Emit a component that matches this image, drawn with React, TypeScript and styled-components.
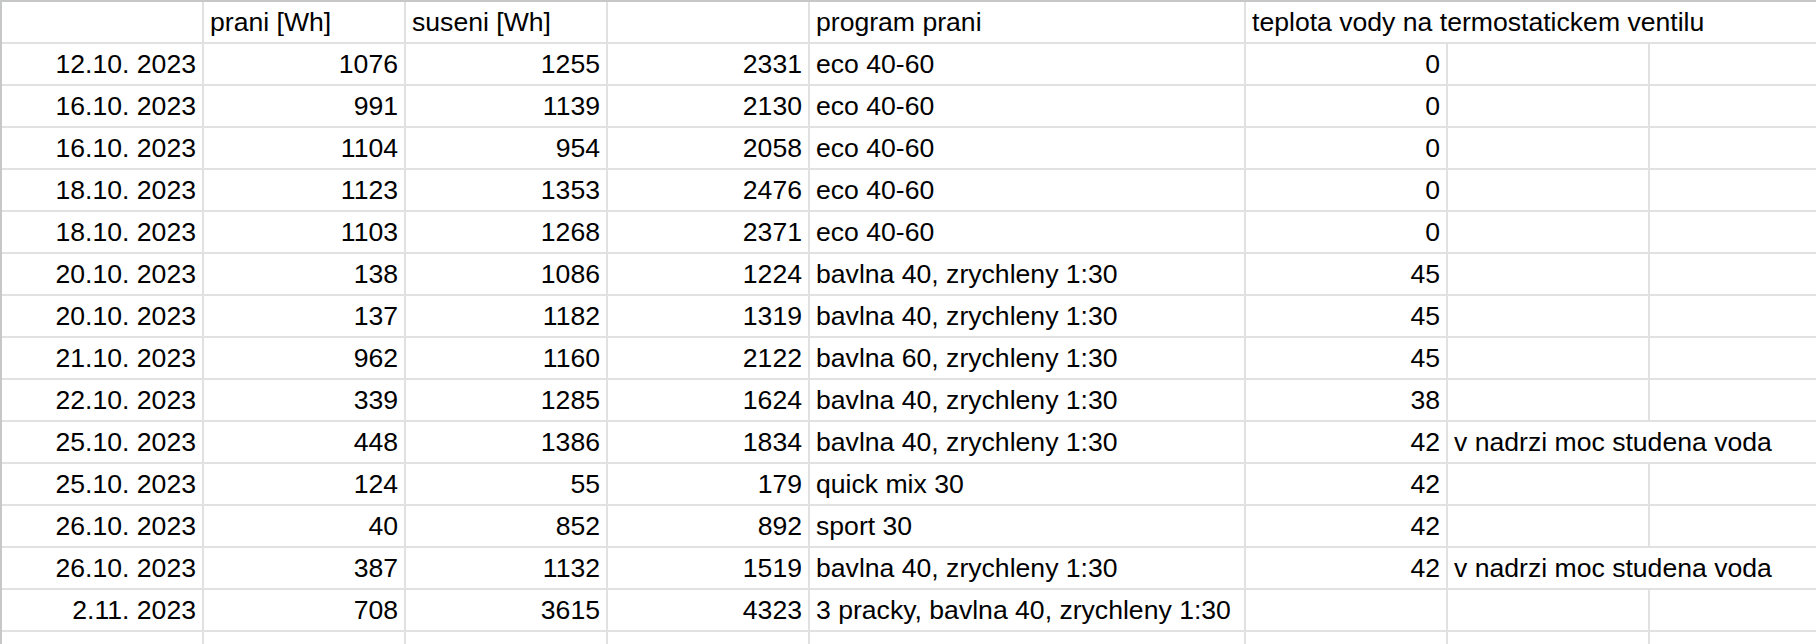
import React from "react";
import styled, { createGlobalStyle } from "styled-components";

const Global = createGlobalStyle`
  html, body {
    margin: 0;
    padding: 0;
    overflow: hidden;
    background: #ffffff;
  }
  body {
    font-family: "Liberation Sans", Arial, sans-serif;
  }
`;

const Sheet = styled.div`
  display: grid;
  grid-template-columns: 200px 200px 200px 200px 434px 200px 200px 1fr;
  grid-auto-rows: 40px;
  gap: 2px;
  background: #e1e1e1;
  border-top: 2px solid #c6c8c7;
  border-left: 2px solid #c6c8c7;
  height: 642px;
  overflow: hidden;
  align-content: start;
`;

const Cell = styled.div<{ $align?: "left" | "right"; $span?: number }>`
  background: #ffffff;
  color: #000000;
  font-family: "Liberation Sans", Arial, sans-serif;
  font-size: 26.6px;
  line-height: 40px;
  padding: 0 6px;
  white-space: nowrap;
  overflow: hidden;
  text-align: ${(p) => (p.$align === "right" ? "right" : "left")};
  grid-column: ${(p) => (p.$span ? `span ${p.$span}` : "auto")};
`;

type Row = [string, number, number, number, string, number | null, string?];

const rows: Row[] = [
  ["12.10. 2023", 1076, 1255, 2331, "eco 40-60", 0],
  ["16.10. 2023", 991, 1139, 2130, "eco 40-60", 0],
  ["16.10. 2023", 1104, 954, 2058, "eco 40-60", 0],
  ["18.10. 2023", 1123, 1353, 2476, "eco 40-60", 0],
  ["18.10. 2023", 1103, 1268, 2371, "eco 40-60", 0],
  ["20.10. 2023", 138, 1086, 1224, "bavlna 40, zrychleny 1:30", 45],
  ["20.10. 2023", 137, 1182, 1319, "bavlna 40, zrychleny 1:30", 45],
  ["21.10. 2023", 962, 1160, 2122, "bavlna 60, zrychleny 1:30", 45],
  ["22.10. 2023", 339, 1285, 1624, "bavlna 40, zrychleny 1:30", 38],
  ["25.10. 2023", 448, 1386, 1834, "bavlna 40, zrychleny 1:30", 42, "v nadrzi moc studena voda"],
  ["25.10. 2023", 124, 55, 179, "quick mix 30", 42],
  ["26.10. 2023", 40, 852, 892, "sport 30", 42],
  ["26.10. 2023", 387, 1132, 1519, "bavlna 40, zrychleny 1:30", 42, "v nadrzi moc studena voda"],
  ["2.11. 2023", 708, 3615, 4323, "3 pracky, bavlna 40, zrychleny 1:30", null],
];

export default function App() {
  return (
    <>
      <Global />
      <Sheet>
        <Cell />
        <Cell>prani [Wh]</Cell>
        <Cell>suseni [Wh]</Cell>
        <Cell />
        <Cell>program prani</Cell>
        <Cell $span={3}>teplota vody na termostatickem ventilu</Cell>
        {rows.map((r, i) => (
          <React.Fragment key={i}>
            <Cell $align="right">{r[0]}</Cell>
            <Cell $align="right">{r[1]}</Cell>
            <Cell $align="right">{r[2]}</Cell>
            <Cell $align="right">{r[3]}</Cell>
            <Cell>{r[4]}</Cell>
            <Cell $align="right">{r[5] ?? ""}</Cell>
            {r[6] ? (
              <Cell $span={2}>{r[6]}</Cell>
            ) : (
              <>
                <Cell />
                <Cell />
              </>
            )}
          </React.Fragment>
        ))}
        {Array.from({ length: 8 }).map((_, i) => (
          <Cell key={`e${i}`} />
        ))}
      </Sheet>
    </>
  );
}
